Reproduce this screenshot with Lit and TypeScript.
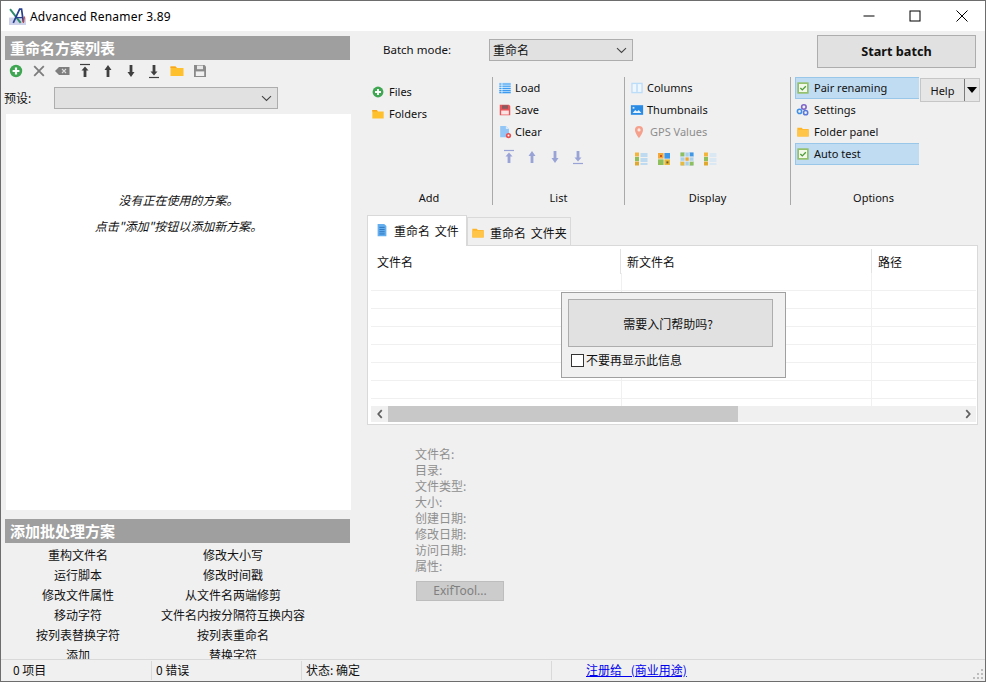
import { LitElement, html, css, svg } from "lit";
import { customElement } from "lit/decorators.js";

const ico = (body: unknown, size = 16, cls = "") =>
  html`<svg class="ico ${cls}" width=${size} height=${size} viewBox="0 0 16 16">${body}</svg>`;

const arrows = (color: string) => ({
  top: svg`<path d="M3 1.5h10" stroke=${color} stroke-width="1.2"/><path d="M8 3.5l3.5 4H9.4V14H6.6V7.5H4.5z" fill=${color}/>`,
  up: svg`<path d="M8 2l3.5 5H9.4v7H6.6V7H4.5z" fill=${color}/>`,
  down: svg`<path d="M8 14l3.5-5H9.4V2H6.6v7H4.5z" fill=${color}/>`,
  bottom: svg`<path d="M3 14.5h10" stroke=${color} stroke-width="1.2"/><path d="M8 12.5l3.5-4H9.4V2H6.6v6.5H4.5z" fill=${color}/>`,
});

const add = svg`<circle cx="8" cy="8" r="6.2" fill="#3fa652"/><path d="M8 4.6v6.8M4.6 8h6.8" stroke="#fff" stroke-width="2.2"/>`;
const folder = svg`<path d="M1.5 3.5h5l1.4 1.6h6.6v8h-13z" fill="#ffc02e"/><path d="M1.5 3.5h5l1.4 1.6H1.5z" fill="#f7a51d"/>`;
const folderOrange = svg`<path d="M1.5 3h5l1.4 1.6h6.6v8.4h-13z" fill="#ffb52a"/><path d="M1.5 5.4h13V13h-13z" fill="#ffc548"/>`;
const cross = svg`<path d="M3.2 3.2l9.6 9.6M12.8 3.2l-9.6 9.6" stroke="#7c7c7c" stroke-width="1.8"/>`;
const erase = svg`<path d="M5 4h10.5v8H5L1 8z" fill="#7e7e7e"/><path d="M8 6l4 4M12 6l-4 4" stroke="#ddd" stroke-width="1.1"/>`;
const floppyGray = svg`<path d="M2 2h10.5L14 3.5V14H2z" fill="#8a8a8a"/><rect x="5" y="2.6" width="6" height="3.6" fill="#e8e8e8"/><rect x="3.8" y="8.4" width="8.4" height="4.6" fill="#f0f0f0"/>`;
const floppyRed = svg`<path d="M2 2h10.5L14 3.5V14H2z" fill="#e8545a"/><rect x="4.6" y="2.6" width="6.8" height="4" fill="#8a5a5e"/><rect x="3.6" y="8.6" width="8.8" height="4.6" fill="#fbe3e3"/>`;
const listLines = svg`<rect x="1.5" y="2" width="13" height="12" fill="#bfe0fb"/><path d="M1.5 3.5h13M1.5 6h13M1.5 8.5h13M1.5 11h13M1.5 13.3h13" stroke="#3c9bf0" stroke-width="1.2"/><path d="M4.5 2v12" stroke="#fff" stroke-width=".8"/>`;
const clear = svg`<path d="M2.5 1h6.5l3.5 3.5V14h-10z" fill="#93c6f6"/><path d="M9 1l3.5 3.5H9z" fill="#d7eafc"/><circle cx="12" cy="12" r="3" fill="#e8504f"/><circle cx="12" cy="12" r="1.1" fill="#fff"/>`;
const columns = svg`<rect x="1.5" y="2" width="13" height="12" fill="#bcdcf8"/><rect x="3" y="3.5" width="4.2" height="9" fill="#eef6fe"/><rect x="8.8" y="3.5" width="4.2" height="9" fill="#eef6fe"/>`;
const thumbs = svg`<rect x="1" y="2.5" width="14" height="11" fill="#2a8be4"/><rect x="3" y="4.5" width="2" height="2" fill="#cfe6fb"/><path d="M3 11.5l3-3.4 2 1.6 2-1.6 3 3.4z" fill="#e9f4fe"/>`;
const pin = svg`<path d="M8 1a4.6 4.6 0 0 1 4.6 4.6C12.6 9 8 15 8 15S3.4 9 3.4 5.6A4.6 4.6 0 0 1 8 1z" fill="#f5a08c"/><circle cx="8" cy="5.6" r="1.8" fill="#fbe9e4"/>`;
const gears = svg`<circle cx="9" cy="4.5" r="2.6" fill="none" stroke="#7d62c8" stroke-width="1.8"/><circle cx="4" cy="9.6" r="2.4" fill="none" stroke="#3f8fe6" stroke-width="1.8"/><circle cx="11" cy="11" r="2.4" fill="none" stroke="#5a78d8" stroke-width="1.8"/>`;
const checked = svg`<rect x="1.5" y="1.5" width="13" height="13" fill="#93c06a"/><rect x="3.4" y="3.4" width="9.2" height="9.2" fill="#f2f8ea"/><path d="M5 8l2.2 2.2L11.2 6" stroke="#4d9a3a" stroke-width="1.5" fill="none"/>`;
const viewList = (a: string) =>
  svg`<rect x="2" y="1.5" width="4" height="4" fill="#f3b63a"/><rect x="2" y="6" width="4" height="4" fill="#8fbf5a"/><rect x="2" y="10.5" width="4" height="4" fill="#e0a92e"/><path d="M7.5 3h7M7.5 5h7M7.5 8h7M7.5 10h7M7.5 13h7" stroke=${a} stroke-width="1.2"/>`;
const viewTiles = svg`<rect x="2" y="2" width="5.6" height="5.6" fill="#f3a93a"/><rect x="8.4" y="2" width="5.6" height="5.6" fill="#3f97e8"/><rect x="2" y="8.4" width="5.6" height="5.6" fill="#8fbf5a"/><rect x="8.4" y="8.4" width="5.6" height="5.6" fill="#e8b93a"/><rect x="4" y="4" width="2" height="2" fill="#c8561e"/><rect x="10.4" y="10.4" width="2" height="2" fill="#6a5a2a"/>`;
const viewGrid = svg`<rect x="1.5" y="1.5" width="13" height="13" fill="#a9cfe9"/><path d="M1.5 1.5h4v4h-4z" fill="#8fbf5a"/><path d="M6 6h4v4H6z" fill="#f0a62e"/><path d="M10.5 1.5h4v4h-4z" fill="#3f97e8"/><path d="M1.5 10.5h4v4h-4z" fill="#e8b93a"/><path d="M10.5 10.5h4v4h-4z" fill="#8fbf5a"/><path d="M6 1.5v13M10.2 1.5v13M1.5 6h13M1.5 10.2h13" stroke="#f0f0f0" stroke-width=".8"/>`;
const docBlue = svg`<path d="M3 1h7.5L13 3.5V15H3z" fill="#62aeef"/><path d="M5 5h6M5 7.5h6M5 10h6M5 12.5h6" stroke="#2a6fb5" stroke-width="1"/>`;
const logo = svg`<path d="M0 9h16v7H0z" fill="#cdd1ea"/><path d="M1 1l10 13" stroke="#2d8a6a" stroke-width="1.8"/><path d="M4 14L10 1h1.8L13.5 13" stroke="#27408f" stroke-width="1.6" fill="none"/><path d="M6.5 9h6.5" stroke="#27408f" stroke-width="1.2"/><path d="M14.5 8l-1 6" stroke="#c8403a" stroke-width="1.2"/>`;

const gray = arrows("#3f3f3f");
const pale = arrows("#99a3d6");

const schemes = [
  ["重构文件名", "修改大小写"],
  ["运行脚本", "修改时间戳"],
  ["修改文件属性", "从文件名两端修剪"],
  ["移动字符", "文件名内按分隔符互换内容"],
  ["按列表替换字符", "按列表重命名"],
  ["添加", "替换字符"],
];
const details = ["文件名:", "目录:", "文件类型:", "大小:", "创建日期:", "修改日期:", "访问日期:", "属性:"];

@customElement("app-root")
export class AppRoot extends LitElement {
  static styles = css`
    :host {
      display: block;
      font-family: "Noto Sans", "Noto Sans CJK SC", sans-serif;
      font-size: 12px;
      color: #111;
    }
    .window {
      box-sizing: border-box;
      width: 986px;
      height: 682px;
      border: 1px solid #6d6d6d;
      background: #f0f0f0;
      display: flex;
      flex-direction: column;
      overflow: hidden;
    }
    .ico { display: block; flex: none; }

    .titlebar {
      height: 30px;
      flex: none;
      background: #fff;
      display: flex;
      align-items: center;
      padding-left: 8px;
    }
    .titlebar .name { margin-left: 4px; flex: 1; color: #000; letter-spacing: 0.2px; }
    .winbtn {
      width: 46px;
      height: 30px;
      display: flex;
      align-items: center;
      justify-content: center;
    }
    .winbtn:last-child { width: 47px; }

    .main { flex: 1; display: flex; min-height: 0; }

    .left {
      width: 350px;
      flex: none;
      display: flex;
      flex-direction: column;
      min-height: 0;
    }
    .band {
      margin: 5px 0 0 4px;
      width: 345px;
      height: 24px;
      flex: none;
      background: #9f9f9f;
      color: #fff;
      font-size: 15px;
      font-weight: 700;
      line-height: 24px;
      padding-left: 5px;
      box-sizing: border-box;
      font-family: "Noto Sans CJK SC", sans-serif;
    }
    .tools {
      display: flex;
      gap: 7px;
      padding: 3px 0 0 7px;
      height: 20px;
      flex: none;
    }
    .preset {
      display: flex;
      align-items: center;
      height: 22px;
      margin-top: 4px;
      padding-left: 3px;
      flex: none;
    }
    .preset label { width: 50px; }
    .combo {
      box-sizing: border-box;
      background: #e1e1e1;
      border: 1px solid #adadad;
      display: flex;
      align-items: center;
      justify-content: space-between;
      padding: 0 5px 0 3px;
    }
    .preset .combo { width: 224px; height: 22px; }
    .list {
      flex: 1;
      margin: 5px 0 0 5px;
      background: #fff;
      display: flex;
      flex-direction: column;
      align-items: center;
      padding-top: 79px;
      gap: 12px;
      box-sizing: border-box;
      font-style: italic;
      font-size: 12px;
      line-height: 14px;
      font-family: "Noto Sans CJK SC", sans-serif;
    }
    .bottom { height: 149px; flex: none; overflow: hidden; }
    .bottom .band { margin-top: 9px; }
    .schemes {
      display: grid;
      grid-template-columns: 146px 164px;
      grid-auto-rows: 20px;
      padding: 3px 0 0 4px;
      text-align: center;
      line-height: 20px;
    }

    .right { flex: 1; min-width: 0; display: flex; flex-direction: column; position: relative; }
    .batch {
      display: flex;
      align-items: flex-start;
      padding: 4px 9px 0 32px;
      height: 33px;
      flex: none;
    }
    .batch .label { width: 106px; font-size: 11.5px; line-height: 22px; margin-top: 4px; }
    .batch .combo { width: 144px; height: 22px; margin-top: 4px; }
    .start {
      margin-left: auto;
      width: 159px;
      height: 33px;
      box-sizing: border-box;
      border: 1px solid #adadad;
      background: #e1e1e1;
      font-weight: 700;
      font-size: 12.7px;
      padding-bottom: 2px;
      display: flex;
      align-items: center;
      justify-content: center;
    }

    .ribbon { display: flex; height: 128px; margin-top: 9px; flex: none; font-size: 11px; }
    .group {
      position: relative;
      box-sizing: border-box;
      display: flex;
      flex-direction: column;
      border-left: 1px solid #a9a9a9;
    }
    .group.g-add { width: 141px; border-left: none; padding: 4px 0 0 20px; }
    .group.g-list { width: 132px; padding: 0 0 0 5px; }
    .group.g-display { width: 166px; padding: 0 0 0 5px; }
    .group.g-options { flex: 1; padding: 0 0 0 4px; }
    .glabel {
      margin-top: auto;
      height: 15px;
      line-height: 15px;
      text-align: center;
    }
    .g-add .glabel { margin-left: -20px; width: 156px; }
    .g-list .glabel { margin-left: -5px; }
    .g-display .glabel { margin-left: -5px; }
    .g-options .glabel { width: 157px; }
    .item {
      display: flex;
      align-items: center;
      box-sizing: border-box;
      height: 22px;
      padding-bottom: 2px;
      gap: 3px;
      white-space: nowrap;
    }
    .item .ico { margin-top: 2px; }
    .item.dim { color: #8d8d8d; padding-left: 2px; gap: 4px; }
    .g-add .item { gap: 4px; }
    .optrow { display: flex; align-items: flex-start; }
    .opts { width: 124px; flex: none; margin-right: 1px; }
    .opts .item { padding-left: 1px; gap: 4px; }
    .opts .item.on {
      background: #bfdcf2;
      border: 1px solid #99c7ea;
      border-right: none;
      padding-left: 0;
    }
    .help {
      width: 60px;
      height: 24px;
      margin-top: 1px;
      box-sizing: border-box;
      border: 1px solid #c6c6c6;
      background: #e6e6e6;
      display: flex;
      align-items: center;
    }
    .help span { flex: 1; text-align: center; font-size: 11px; }
    .help i {
      display: flex;
      width: 15px;
      height: 100%;
      align-items: center;
      justify-content: center;
      border-left: 1px solid #7a7a7a;
      box-sizing: border-box;
    }
    .help i::after {
      content: "";
      border-left: 5.5px solid transparent;
      border-right: 5.5px solid transparent;
      border-top: 6px solid #000;
    }
    .minis { display: flex; gap: 7px; margin-top: 6px; }
    .g-display .minis { padding-left: 3px; margin-top: 8px; }
    .g-list .minis { padding-left: 3px; }

    .tabs { display: flex; align-items: flex-end; margin: 10px 7px 0 16px; height: 30px; flex: none; }
    .tab {
      box-sizing: border-box;
      display: flex;
      align-items: center;
      gap: 5px;
      border: 1px solid #d9d9d9;
      border-bottom: none;
      word-spacing: 2px;
      font-family: "Noto Sans CJK SC", sans-serif;
    }
    .tab.active {
      background: #fff;
      width: 100px;
      height: 31px;
      margin-bottom: -1px;
      padding: 0 0 2px 7px;
      position: relative;
      gap: 5px;
      z-index: 1;
    }
    .tab.other { width: 104px; height: 28px; padding: 2px 0 0 3px; }
    .table {
      box-sizing: border-box;
      margin: 0 7px 0 16px;
      height: 180px;
      flex: none;
      background: #fff;
      border: 1px solid #d9d9d9;
      padding: 0 1px 2px 3px;
      display: flex;
      flex-direction: column;
      position: relative;
    }
    .head { display: grid; grid-template-columns: 250px 251px 1fr; height: 27px; flex: none; padding-top: 3px; box-sizing: border-box; }
    .head div {
      padding: 1px 0 0 6px;
      line-height: 24px;
      border-right: 1px solid #e2e2e2;
      font-family: "Noto Sans CJK SC", sans-serif;
    }
    .head div:last-child { border-right: none; }
    .rows { flex: 1; min-height: 0; overflow: hidden; }
    .row { display: grid; grid-template-columns: 251px 250px 1fr; height: 18px; box-sizing: border-box; border-bottom: 1px solid #f0f0f0; }
    .row:last-child { border-bottom: none; }
    .row div { border-right: 1px solid #f0f0f0; }
    .row div:last-child { border-right: none; }
    .hscroll { height: 16px; flex: none; background: #f0f0f0; display: flex; align-items: center; }
    .hscroll .btn { width: 17px; display: flex; justify-content: center; flex: none; }
    .hscroll .thumb { width: 350px; height: 16px; background: #c8c8c8; flex: none; }
    .hscroll .fill { flex: 1; }

    .tip {
      position: absolute;
      left: 193px;
      top: 46px;
      width: 225px;
      height: 86px;
      box-sizing: border-box;
      border: 1px solid #a0a0a0;
      background: #f0f0f0;
      padding: 6px;
      font-family: "Noto Sans CJK SC", sans-serif;
    }
    .tip .ask {
      width: 205px;
      height: 48px;
      box-sizing: border-box;
      border: 1px solid #adadad;
      background: #e1e1e1;
      padding-right: 5px;
      display: flex;
      align-items: center;
      justify-content: center;
    }
    .tip .never { display: flex; align-items: center; gap: 2px; margin: 5px 0 0 3px; line-height: 16px; }
    .tip .box { width: 13px; height: 13px; box-sizing: border-box; border: 1px solid #333; background: #fff; }

    .details { padding: 21px 0 0 64px; color: #8f8f8f; line-height: 16px; font-family: "Noto Sans CJK SC", sans-serif; }
    .exif {
      width: 88px;
      height: 20px;
      margin: 7px 0 0 1px;
      box-sizing: border-box;
      border: 1px solid #bdbdbd;
      background: #cccccc;
      color: #808080;
      display: flex;
      align-items: center;
      justify-content: center;
      font-family: "Noto Sans", sans-serif;
    }

    .status {
      height: 22px;
      flex: none;
      border-top: 1px solid #d9d9d9;
      display: flex;
      box-sizing: border-box;
      position: relative;
      font-family: "Noto Sans CJK SC", sans-serif;
    }
    .cell { box-sizing: border-box; line-height: 18px; border-right: 1px solid #d9d9d9; margin: 1px 0; white-space: nowrap; padding-left: 4px; }
    .cell.c1 { width: 151px; padding-left: 12px; }
    .cell.c2 { width: 150px; }
    .cell.c3 { width: 250px; }
    .cell.c4 { width: 110px; padding-left: 34px; border-right-color: #e4e4e4; }
    .cell.c4 a { color: #0000ee; text-decoration: underline; word-spacing: 6px; }
    .grip { position: absolute; right: 1px; bottom: 1px; }
  `;

  render() {
    return html`
      <div class="window">
        <div class="titlebar">
          ${ico(logo, 17)}
          <span class="name">Advanced Renamer 3.89</span>
          <div class="winbtn">${ico(svg`<path d="M2.5 8h11" stroke="#000" stroke-width="1"/>`, 16)}</div>
          <div class="winbtn">${ico(svg`<rect x="3" y="3" width="10" height="10" fill="none" stroke="#000"/>`, 16)}</div>
          <div class="winbtn">${ico(svg`<path d="M2.5 2.5l11 11M13.5 2.5l-11 11" stroke="#000" stroke-width="1"/>`, 16)}</div>
        </div>
        <div class="main">
          ${this.renderLeft()}
          <div class="right">
            ${this.renderBatch()} ${this.renderRibbon()} ${this.renderTable()}
            <div class="details">
              ${details.map((d) => html`<div>${d}</div>`)}
              <div class="exif">ExifTool...</div>
            </div>
          </div>
        </div>
        <div class="status">
          <div class="cell c1">0 项目</div>
          <div class="cell c2">0 错误</div>
          <div class="cell c3">状态: 确定</div>
          <div class="cell c4"><a>注册给 (商业用途)</a></div>
          <svg class="grip" width="11" height="11" viewBox="0 0 11 11" fill="#bdbdbd">
            <rect x="8" y="0" width="2" height="2" /><rect x="4" y="4" width="2" height="2" /><rect x="8" y="4" width="2" height="2" />
            <rect x="0" y="8" width="2" height="2" /><rect x="4" y="8" width="2" height="2" /><rect x="8" y="8" width="2" height="2" />
          </svg>
        </div>
      </div>
    `;
  }

  renderLeft() {
    const tools = [add, cross, erase, gray.top, gray.up, gray.down, gray.bottom, folder, floppyGray];
    return html`
      <div class="left">
        <div class="band">重命名方案列表</div>
        <div class="tools">${tools.map((t) => ico(t))}</div>
        <div class="preset">
          <label>预设:</label>
          <div class="combo"><span></span>${this.chevron()}</div>
        </div>
        <div class="list">
          <div>没有正在使用的方案。</div>
          <div>点击"添加"按钮以添加新方案。</div>
        </div>
        <div class="bottom">
          <div class="band">添加批处理方案</div>
          <div class="schemes">${schemes.flat().map((s) => html`<div>${s}</div>`)}</div>
        </div>
      </div>
    `;
  }

  renderBatch() {
    return html`
      <div class="batch">
        <span class="label">Batch mode:</span>
        <div class="combo"><span>重命名</span>${this.chevron()}</div>
        <div class="start">Start batch</div>
      </div>
    `;
  }

  renderRibbon() {
    return html`
      <div class="ribbon">
        <div class="group g-add">
          <div class="item">${ico(add, 14)}Files</div>
          <div class="item">${ico(folder, 14)}Folders</div>
          <div class="glabel">Add</div>
        </div>
        <div class="group g-list">
          <div class="item">${ico(listLines, 14)}Load</div>
          <div class="item">${ico(floppyRed, 14)}Save</div>
          <div class="item">${ico(clear, 14)}Clear</div>
          <div class="minis">${[pale.top, pale.up, pale.down, pale.bottom].map((p) => ico(p))}</div>
          <div class="glabel">List</div>
        </div>
        <div class="group g-display">
          <div class="item">${ico(columns, 14)}Columns</div>
          <div class="item">${ico(thumbs, 14)}Thumbnails</div>
          <div class="item dim">${ico(pin, 14)}GPS Values</div>
          <div class="minis">
            ${[viewList("#8cc4f0"), viewTiles, viewGrid, viewList("#c4dff5")].map((v) => ico(v))}
          </div>
          <div class="glabel">Display</div>
        </div>
        <div class="group g-options">
          <div class="optrow">
            <div class="opts">
              <div class="item on">${ico(checked, 14)}Pair renaming</div>
              <div class="item">${ico(gears, 14)}Settings</div>
              <div class="item">${ico(folderOrange, 14)}Folder panel</div>
              <div class="item on">${ico(checked, 14)}Auto test</div>
            </div>
            <div class="help"><span>Help</span><i></i></div>
          </div>
          <div class="glabel">Options</div>
        </div>
      </div>
    `;
  }

  renderTable() {
    return html`
      <div class="tabs">
        <div class="tab active">${ico(docBlue, 14)}重命名 文件</div>
        <div class="tab other">${ico(folderOrange, 14)}重命名 文件夹</div>
      </div>
      <div class="table">
        <div class="head"><div>文件名</div><div>新文件名</div><div>路径</div></div>
        <div class="rows">
          ${[0, 1, 2, 3, 4, 5, 6, 7].map(() => html`<div class="row"><div></div><div></div><div></div></div>`)}
        </div>
        <div class="hscroll">
          <div class="btn">${ico(svg`<path d="M10 3.5L6 8l4 4.5" stroke="#606060" stroke-width="2" fill="none"/>`, 14)}</div>
          <div class="thumb"></div>
          <div class="fill"></div>
          <div class="btn">${ico(svg`<path d="M6 3.5L10 8l-4 4.5" stroke="#606060" stroke-width="2" fill="none"/>`, 14)}</div>
        </div>
        <div class="tip">
          <div class="ask">需要入门帮助吗?</div>
          <div class="never"><span class="box"></span>不要再显示此信息</div>
        </div>
      </div>
    `;
  }

  chevron() {
    return html`<svg class="ico" width="11" height="7" viewBox="0 0 11 7">
      <path d="M1 1.2l4.5 4.3L10 1.2" fill="none" stroke="#444" stroke-width="1.1" />
    </svg>`;
  }
}
